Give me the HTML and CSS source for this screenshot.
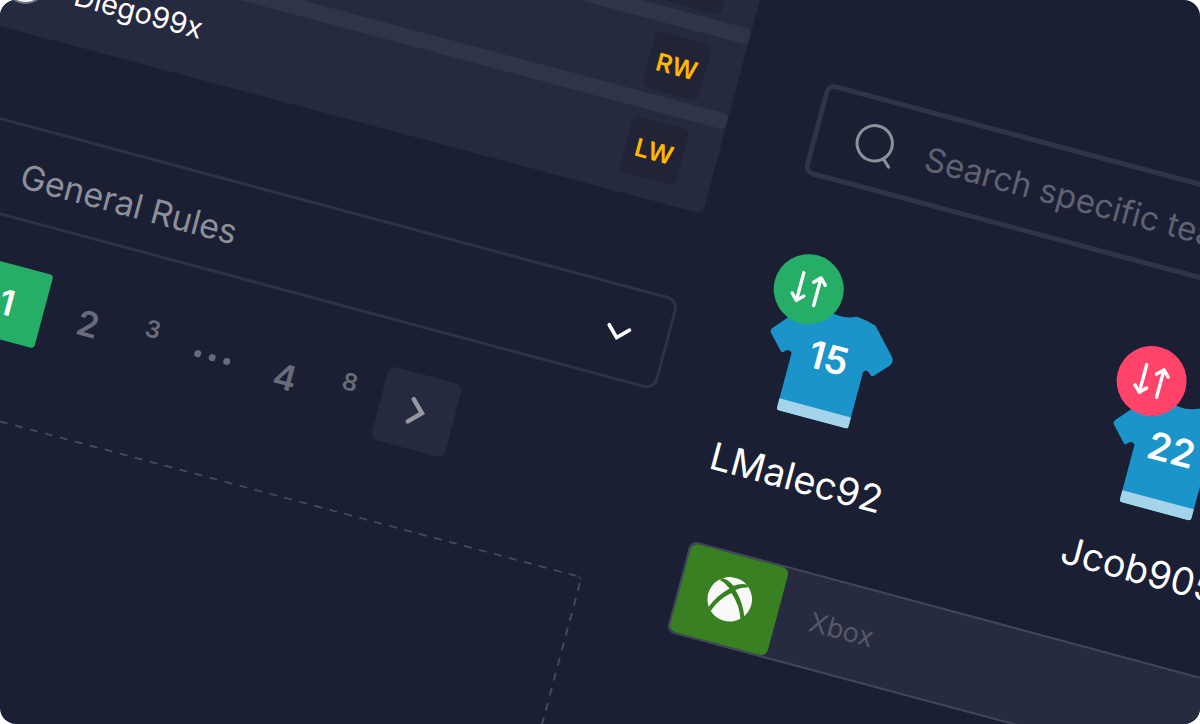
FILE: index.html
```html
<!DOCTYPE html>
<html lang="en">
<head>
    <meta charset="UTF-8">
    <meta name="viewport" content="width=device-width, initial-scale=1.0">
    <title>Team Manager</title>
    <link rel="stylesheet" href="styles.css">
</head>
<body>

    <main class="stage">
        <div class="board">

            <section class="side">
                <ul class="roster">
                    <li class="roster-row"><span class="position"></span></li>
                    <li class="roster-row"><span class="position">RW</span></li>
                    <li class="roster-row">
                        <span class="avatar">
                            <svg viewBox="0 0 44 44" width="44" height="44" aria-hidden="true">
                                <circle cx="22" cy="22" r="22" fill="#6f7380"/>
                                <circle cx="22" cy="22" r="20" fill="#f4f4f6"/>
                                <path d="M22 34l3 5 5-2M14 33l4 6" fill="none" stroke="#30343f" stroke-width="1"/>
                            </svg>
                        </span>
                        <span class="name">Diego99x</span>
                        <span class="position">LW</span>
                    </li>
                </ul>

                <div class="rules">
                    <span class="rules-dot"></span>
                    <select class="rules-select" aria-label="Rules">
                        <option>General Rules</option>
                    </select>
                    <svg class="rules-arrow" viewBox="0 0 26 16" width="26" height="16" aria-hidden="true">
                        <path d="M2.5 3L13 13.500 23.500 3" fill="none" stroke="#fff" stroke-width="3.600" stroke-linecap="round"/>
                    </svg>
                </div>

                <nav class="pages" aria-label="Pages">
                    <button class="page current">1</button>
                    <button class="page">2</button>
                    <button class="page small">3</button>
                    <span class="dots"><i></i><i></i><i></i></span>
                    <button class="page medium">4</button>
                    <button class="page small last">8</button>
                    <button class="page next" aria-label="Next page">
                        <svg viewBox="0 0 18 30" width="18" height="30" aria-hidden="true">
                            <path d="M3 3.500L14.500 15 3 26.500" fill="none" stroke="#9597a3" stroke-width="4.500" stroke-linecap="round"/>
                        </svg>
                    </button>
                </nav>

                <div class="dropzone">
                    <svg width="744" height="420" aria-hidden="true">
                        <path d="M736 1H6M741 7V420" fill="none" stroke="#454959" stroke-width="2" stroke-dasharray="8 7.500"/>
                        <path d="M738 1l3 2" fill="none" stroke="#454959" stroke-width="1"/>
                    </svg>
                </div>
            </section>

            <section class="team">
                <label class="search">
                    <svg class="search-icon" viewBox="0 0 44 44" width="44" height="44" aria-hidden="true">
                        <circle cx="20" cy="21" r="17.700" fill="none" stroke="#8d8f9a" stroke-width="3"/>
                        <path d="M32.500 34L39.500 40.500" fill="none" stroke="#8d8f9a" stroke-width="3" stroke-linecap="round"/>
                    </svg>
                    <input class="search-input" type="text" placeholder="Search specific team" aria-label="Search specific team">
                </label>

                <div class="players">
                    <article class="player">
                        <div class="shirt">
                            <svg viewBox="0 0 130 112" width="130" height="112" aria-hidden="true">
                                <path d="M48 1Q65 9 82 1Q93 2 102 5L126 31Q128 33 127.500 37Q127 39 125 41L113 54Q111 56 109 53Q105 49 102 53V109Q102 112 99 112H31Q28 112 28 109V53Q25 49 21 53Q19 56 17 54L3 39Q1 37 3 34L28 5Q37 2 48 1Z" fill="#1b94ca"/>
                                <path d="M28 100H102V109Q102 112 99 112H31Q28 112 28 109Z" fill="#a5d4ea"/>
                            </svg>
                            <span class="number">15</span>
                            <button class="swap in" aria-label="Swap LMalec92">
                                <svg viewBox="0 0 36 36" width="36" height="36" aria-hidden="true">
                                    <path d="M9 3.500V32M3 26l6 6 6-6M27 32.500V4M21 10l6-6 6 6" fill="none" stroke="#fff" stroke-width="3.400" stroke-linecap="round" stroke-linejoin="round"/>
                                </svg>
                            </button>
                        </div>
                        <p class="player-name">LMalec92</p>
                    </article>
                    <article class="player">
                        <div class="shirt">
                            <svg viewBox="0 0 130 112" width="130" height="112" aria-hidden="true">
                                <path d="M48 1Q65 9 82 1Q93 2 102 5L126 31Q128 33 127.500 37Q127 39 125 41L113 54Q111 56 109 53Q105 49 102 53V109Q102 112 99 112H31Q28 112 28 109V53Q25 49 21 53Q19 56 17 54L3 39Q1 37 3 34L28 5Q37 2 48 1Z" fill="#1b94ca"/>
                                <path d="M28 100H102V109Q102 112 99 112H31Q28 112 28 109Z" fill="#a5d4ea"/>
                            </svg>
                            <span class="number">22</span>
                            <button class="swap out" aria-label="Swap Jcob905">
                                <svg viewBox="0 0 36 36" width="36" height="36" aria-hidden="true">
                                    <path d="M9 3.500V32M3 26l6 6 6-6M27 32.500V4M21 10l6-6 6 6" fill="none" stroke="#fff" stroke-width="3.400" stroke-linecap="round" stroke-linejoin="round"/>
                                </svg>
                            </button>
                        </div>
                        <p class="player-name">Jcob905</p>
                    </article>
                </div>

                <label class="platform">
                    <span class="platform-logo">
                        <svg viewBox="0 0 46 46" width="46" height="46" aria-hidden="true">
                            <circle cx="23" cy="22" r="22.300" fill="#f9f9f9"/>
                            <path d="M4.500 35Q9 22 20 11.500Q14 7 8.500 6L10 3.500Q16 3 23 8Q30 3 36 3.500L37.500 6Q32 7 26 11.500Q37 22 41.500 35L38.500 38.500Q34 25 23 15.500Q12 25 7.500 38.500Z" fill="#388022"/>
                        </svg>
                    </span>
                    <input class="platform-input" type="text" placeholder="Xbox" aria-label="Xbox">
                </label>
            </section>

        </div>
    </main>

</body>
</html>
```

FILE: styles.css
```css
* {
    box-sizing: border-box;
}
body {
    margin: 0;
    background-color: #fff;
    font-family: Inter, sans-serif;
    color: #fff;
}
button,
input,
select {
    font-family: inherit;
    border: none;
    background: none;
    padding: 0;
    margin: 0;
    outline: none;
}
button {
    cursor: pointer;
}
svg {
    display: block;
}
.stage {
    display: flex;
    align-items: flex-start;
    height: 100vh;
    overflow: hidden;
    background-color: #1a1f34;
    border-radius: 16px;
}
/* The whole board is tilted around the top left corner of the stage */
.board {
    display: flex;
    flex: none;
    gap: 73px;
    width: 130%;
    margin: -238px 0 0 -30px;
    transform: rotate(15deg);
    transform-origin: 30px 238px;
}

/* Left column */
.side {
    flex: 0 0 764px;
}
.roster {
    list-style-type: none;
    margin: 0;
    padding: 0 0 11px;
    background-color: #262a40;
    border-radius: 0 0 8px 8px;
}
.roster-row {
    position: relative;
    display: flex;
    align-items: center;
    height: 88px;
    padding: 0 34px 12px 28px;
}
.roster-row:last-child {
    height: 76px;
    padding-bottom: 0;
}
/* Divider bar under each row */
.roster-row:not(:last-child)::after {
    content: "";
    position: absolute;
    left: 0;
    right: 0;
    bottom: 0;
    height: 16px;
    border-radius: 6px;
    background-color: #303448;
}
.avatar {
    margin-right: 29px;
}
.name {
    font-size: 29px;
    line-height: 36px;
}
.position {
    width: 58px;
    height: 58px;
    margin-left: auto;
    border-radius: 6px;
    background-color: #202436;
    color: #ffb800;
    font-size: 25px;
    font-weight: 600;
    line-height: 60px;
    text-align: center;
}
.rules {
    display: flex;
    align-items: center;
    height: 95px;
    margin-top: 88px;
    padding: 0 35px 0 29px;
    border: 3px solid #2e3247;
    border-radius: 12px;
}
.rules-dot {
    width: 40px;
    height: 40px;
    margin-right: 24px;
    border-radius: 50%;
    background-color: #1b94ca;
}
.rules-select {
    flex: 1;
    height: 80px;
    padding-top: 6px;
    appearance: none;
    color: #8d8f9a;
    font-size: 34px;
}
.pages {
    display: flex;
    gap: 8px;
    margin: 44px 0 0 77px;
}
.page {
    width: 76px;
    height: 76px;
    border-radius: 8px;
    color: #686b7a;
    font-size: 35px;
    font-weight: 600;
    line-height: 76px;
    text-align: center;
}
.current {
    background-color: #27ae66;
    border-radius: 4px;
    color: #fff;
}
.medium {
    width: 60px;
}
.small {
    width: 36px;
    height: 54px;
    font-size: 24px;
    line-height: 54px;
}
.last {
    width: 52px;
}
.dots {
    display: flex;
    align-items: center;
    justify-content: center;
    gap: 8px;
    width: 76px;
}
.dots i {
    width: 7px;
    height: 7px;
    border-radius: 50%;
    background-color: #686b7a;
}
.next {
    display: flex;
    align-items: center;
    justify-content: center;
    background-color: #262a40;
}
.dropzone {
    margin-top: 78px;
}

/* Right column */
.team {
    flex: 1;
    padding-top: 103px;
}
.search {
    display: flex;
    align-items: center;
    height: 95px;
    margin-left: 13px;
    padding-left: 37px;
    border: 5px solid #303448;
    border-radius: 10px;
}
.search-input {
    flex: 1;
    margin-left: 29px;
    color: #fff;
    font-size: 33px;
}
.search-input::placeholder {
    color: #5f6271;
    opacity: 1;
}
.players {
    display: flex;
    gap: 155px;
    margin: 123px 0 0 -14px;
}
.player {
    flex: 0 0 200px;
}
.shirt {
    position: relative;
    width: 130px;
    margin: 0 auto;
}
.number {
    position: absolute;
    top: 24px;
    left: 0;
    width: 100%;
    font-size: 38px;
    font-weight: 600;
    line-height: 48px;
    text-align: center;
}
.swap {
    position: absolute;
    top: -48px;
    left: -7px;
    display: flex;
    align-items: center;
    justify-content: center;
    width: 70px;
    height: 70px;
    border-radius: 50%;
}
.in {
    background-color: #27ae66;
}
.out {
    background-color: #ff4369;
}
.player-name {
    margin: 36px 0 0;
    font-size: 38px;
    line-height: 48px;
    text-align: center;
}
.platform {
    display: flex;
    height: 95px;
    margin-top: 64px;
    border: 2px solid #42465a;
    border-radius: 8px;
    background-color: #272b3f;
}
.platform-logo {
    display: flex;
    align-items: center;
    justify-content: center;
    width: 101px;
    border-radius: 7px;
    background-color: #388022;
}
.platform-input {
    flex: 1;
    padding-left: 33px;
    color: #fff;
    font-size: 27px;
}
.platform-input::placeholder {
    color: #555868;
    opacity: 1;
}
```
